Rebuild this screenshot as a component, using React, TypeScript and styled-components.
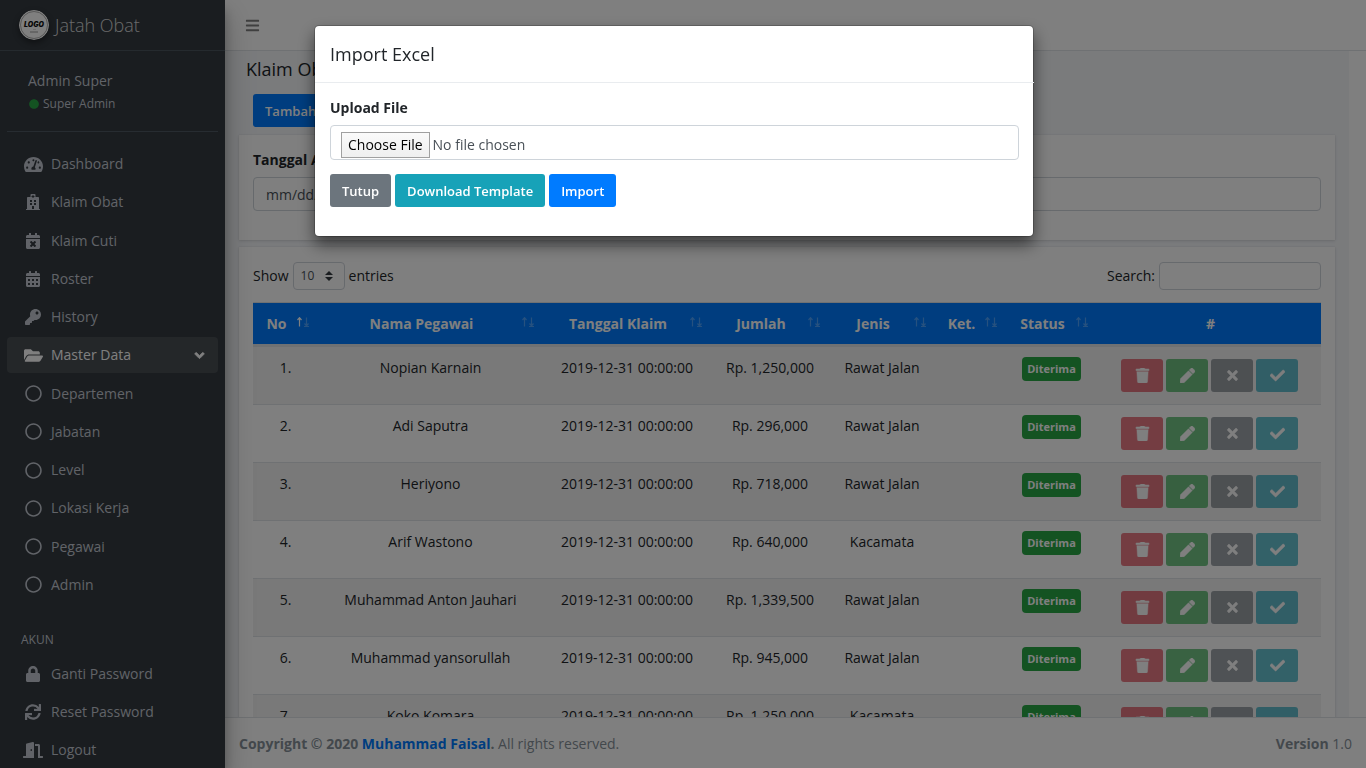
import React from "react";
import styled, { createGlobalStyle } from "styled-components";
import {
  FaAngleDown, FaBars, FaCalendarAlt, FaCalendarTimes, FaCheck, FaCircle, FaDoorOpen, FaFolderOpen,
  FaHospital, FaKey, FaLock, FaPen, FaRegCircle, FaSync, FaTachometerAlt, FaTimes, FaTrash,
} from "react-icons/fa";

const GlobalStyle = createGlobalStyle`
  *, *::before, *::after { box-sizing: border-box; }
  body {
    margin: 0;
    background: #fff;
    color: #212529;
    font: 400 14px/20px "Open Sans", "Noto Sans", sans-serif;
  }
  button, input, select { font: inherit; }
  a { text-decoration: none; }
`;

const Shell = styled.div`
  display: flex;
  height: 100vh;
  overflow: hidden;
`;

const Sidebar = styled.aside`
  display: flex;
  flex-direction: column;
  flex: 0 0 225px;
  z-index: 1;
  background: #343a40;
  color: #c2c7d0;
  box-shadow: 0 14px 28px rgba(0, 0, 0, 0.25), 0 10px 10px rgba(0, 0, 0, 0.22);
`;

const Brand = styled.a`
  display: flex;
  align-items: center;
  gap: 6px;
  height: 51px;
  padding: 0 19px;
  border-bottom: 1px solid #4b545c;
  color: rgba(255, 255, 255, 0.8);
  font-size: 18px;
  font-weight: 300;
`;

const LogoMark = styled.svg`
  width: 30px;
  height: 30px;
  border-radius: 50%;
  box-shadow: 0 3px 6px rgba(0, 0, 0, 0.4);
`;

const UserPanel = styled.div`
  height: 81px;
  margin: 0 7px;
  padding: 19px 21px 0;
  border-bottom: 1px solid #4f5962;
`;

const UserName = styled.div`
  line-height: 22px;
`;

const UserRole = styled.div`
  display: flex;
  align-items: center;
  gap: 4px;
  padding-left: 1px;
  font-size: 12px;
  line-height: 24px;

  svg { color: #28a745; }
`;

const NavList = styled.ul`
  display: flex;
  flex-direction: column;
  justify-content: space-between;
  gap: 2px;
  margin: 0 7px;
  padding: 0;
  list-style: none;
`;

const MainNav = styled(NavList)`
  min-height: 457px;
  margin-top: 14px;
`;

const NavHeader = styled.h2`
  margin: 26px 21px 6px;
  font-size: 12px;
  font-weight: 400;
  line-height: 21px;
`;

const NavLink = styled.a<{ $active?: boolean }>`
  display: flex;
  align-items: center;
  gap: 8px;
  height: 36px;
  padding: 0 11px 0 16px;
  border-radius: 4px;
  background: ${(p) => (p.$active ? "rgba(255, 255, 255, 0.1)" : "transparent")};
  color: ${(p) => (p.$active ? "#fff" : "#c2c7d0")};
`;

const NavIcon = styled.span`
  display: flex;
  justify-content: center;
  width: 20px;
  font-size: 16px;
`;

const NavText = styled.span`
  flex: 1;
`;

const NavArrow = styled(FaAngleDown)`
  stroke: currentColor;
  stroke-width: 24;
`;

const Page = styled.div`
  display: flex;
  flex: 1;
  flex-direction: column;
  min-width: 0;
`;

const Navbar = styled.header`
  display: flex;
  align-items: center;
  flex: 0 0 51px;
  padding: 0 20px;
  border-bottom: 1px solid #dee2e6;
  background: #fff;
`;

const MenuButton = styled.button`
  display: flex;
  padding: 0;
  border: 0;
  background: none;
  color: rgba(0, 0, 0, 0.5);
  font-size: 15px;
`;

const Content = styled.main`
  flex: 1;
  min-height: 0;
  margin-right: 17px;
  padding: 6px 14px 0;
  overflow: hidden;
  background: #f4f6f9;
`;

const PageTitle = styled.h1`
  margin: 0 7px;
  font-size: 18px;
  font-weight: 400;
  line-height: 24px;
`;

const Toolbar = styled.div`
  padding: 13px 14px 8px;
`;

const tones = {
  primary: "#007bff",
  secondary: "#6c757d",
  info: "#17a2b8",
  danger: "#dc3545",
  success: "#28a745",
};

const Button = styled.button<{ $tone: keyof typeof tones }>`
  height: 33px;
  padding: 0 12px;
  border: 0;
  border-radius: 3px;
  background: ${(p) => tones[p.$tone]};
  color: #fff;
  font-size: 13px;
  font-weight: 600;
`;

const Card = styled.section`
  margin-bottom: 7px;
  padding: 14px;
  background: #fff;
  box-shadow: 0 0 1px rgba(0, 0, 0, 0.1), 0 1px 3px rgba(0, 0, 0, 0.12);
`;

const Field = styled.div`
  display: flex;
  flex-direction: column;
  gap: 6px;
`;

const FieldLabel = styled.label`
  font-weight: 700;
  line-height: 22px;
`;

const TextInput = styled.input`
  width: 100%;
  height: 34px;
  padding: 0 12px;
  border: 1px solid #ced4da;
  border-radius: 4px;
  background: #fff;
  color: #495057;

  &::placeholder { color: #495057; }
`;

const FilterCard = styled(Card)`
  padding-bottom: 29px;
`;

const TableControls = styled.div`
  display: flex;
  justify-content: space-between;
  padding: 1px 0 12px;
`;

const ControlLabel = styled.label`
  display: flex;
  align-items: center;
  gap: 4px;
`;

const SelectBox = styled.span`
  display: flex;
  align-items: center;
  width: 52px;
  height: 28px;
  padding-right: 11px;
  border: 1px solid #ced4da;
  border-radius: 4px;

  select {
    flex: 1;
    min-width: 0;
    height: 26px;
    padding: 0 0 0 7px;
    border: 0;
    background: none;
    color: #495057;
    font-size: 12px;
    appearance: none;
  }
`;

const SearchInput = styled(TextInput)`
  width: 162px;
  height: 28px;
`;

const DataTable = styled.table`
  width: 100%;
  border-collapse: separate;
  border-spacing: 0;
  table-layout: fixed;
  text-align: center;
`;

const HeadCell = styled.th`
  height: 44px;
  padding: 0 9px 0 12px;
  border-top: 1px solid #dee2e6;
  border-bottom: 2px solid #dee2e6;
  background: #007bff;
  background-clip: padding-box;
  color: #fff;
  font-weight: 700;
`;

const HeadContent = styled.div`
  display: flex;
  align-items: center;
  gap: 9px;
`;

const HeadText = styled.span`
  flex: 1;
`;

const SortIcon = styled.svg`
  width: 12px;
  height: 14px;
`;

const Row = styled.tr`
  &:nth-child(odd) { background: rgba(0, 0, 0, 0.05); }
`;

const Cell = styled.td`
  height: 58px;
  padding: 11px 0;
  border-top: 1px solid #dee2e6;
  vertical-align: top;
  white-space: nowrap;
`;

const StatusCell = styled(Cell)`
  padding-top: 10px;
`;

const Badge = styled.span`
  display: inline-block;
  padding: 0 5px;
  border-radius: 4px;
  background: #28a745;
  color: #fff;
  font-size: 11px;
  font-weight: 700;
  line-height: 24px;
`;

const Actions = styled.div`
  display: flex;
  justify-content: center;
  gap: 3px;
  padding: 1px 0 0 1px;
`;

const ActionButton = styled(Button)`
  display: flex;
  align-items: center;
  justify-content: center;
  width: 42px;
  font-size: 15px;
  opacity: 0.65;

  svg {
    stroke: currentColor;
    stroke-width: 16;
  }
`;

const Footer = styled.footer`
  display: flex;
  justify-content: space-between;
  align-items: center;
  flex: 0 0 51px;
  padding: 2px 14px 0;
  border-top: 1px solid #dee2e6;
  background: #fff;
  color: #869099;

  a { color: #007bff; }
`;

const Backdrop = styled.div`
  position: fixed;
  inset: 0;
  z-index: 10;
  padding: 25px 18px 0 0;
  background: rgba(0, 0, 0, 0.5);
`;

const Dialog = styled.section`
  width: 100%;
  max-width: 720px;
  margin: 0 auto;
  border: 1px solid rgba(0, 0, 0, 0.2);
  border-radius: 5px;
  background: #fff;
  background-clip: padding-box;
  box-shadow: 0 8px 16px rgba(0, 0, 0, 0.5);
`;

const DialogTitle = styled.h2`
  margin: 0 -1px 0 0;
  padding: 16px 15px;
  border-bottom: 1px solid #e9ecef;
  font-size: 18px;
  font-weight: 400;
  line-height: 24px;
`;

const DialogBody = styled.form`
  padding: 14px 14px 29px 15px;
`;

const FileInput = styled.input`
  width: 100%;
  height: 35px;
  padding: 6px 10px 0;
  border: 1px solid #ced4da;
  border-radius: 4px;
  color: #495057;

  &::file-selector-button {
    height: 26px;
    margin: 0 3px 0 0;
    padding: 0 6px;
    border: 1px solid #a0a0a0;
    border-radius: 0;
    background: linear-gradient(#fafafa, #efefef);
    color: #000;
    font: inherit;
  }
`;

const DialogActions = styled.div`
  display: flex;
  gap: 4px;
  padding-top: 14px;
`;

const menu = [
  { label: "Dashboard", icon: <FaTachometerAlt size={19} /> },
  { label: "Klaim Obat", icon: <FaHospital /> },
  { label: "Klaim Cuti", icon: <FaCalendarTimes /> },
  { label: "Roster", icon: <FaCalendarAlt /> },
  { label: "History", icon: <FaKey /> },
  { label: "Master Data", icon: <FaFolderOpen size={19} />, open: true },
  { label: "Departemen", icon: <FaRegCircle size={17} /> },
  { label: "Jabatan", icon: <FaRegCircle size={17} /> },
  { label: "Level", icon: <FaRegCircle size={17} /> },
  { label: "Lokasi Kerja", icon: <FaRegCircle size={17} /> },
  { label: "Pegawai", icon: <FaRegCircle size={17} /> },
  { label: "Admin", icon: <FaRegCircle size={17} /> },
];

const account = [
  { label: "Ganti Password", icon: <FaLock /> },
  { label: "Reset Password", icon: <FaSync /> },
  { label: "Logout", icon: <FaDoorOpen size={20} /> },
];

const columns = [
  { label: "No", width: 65 },
  { label: "Nama Pegawai", width: 225 },
  { label: "Tanggal Klaim", width: 168 },
  { label: "Jumlah", width: 118 },
  { label: "Jenis", width: 106 },
  { label: "Ket.", width: 71 },
  { label: "Status", width: 91 },
  { label: "#", width: 224 },
];

const claims = [
  ["Nopian Karnain", "Rp. 1,250,000", "Rawat Jalan"],
  ["Adi Saputra", "Rp. 296,000", "Rawat Jalan"],
  ["Heriyono", "Rp. 718,000", "Rawat Jalan"],
  ["Arif Wastono", "Rp. 640,000", "Kacamata"],
  ["Muhammad Anton Jauhari", "Rp. 1,339,500", "Rawat Jalan"],
  ["Muhammad yansorullah", "Rp. 945,000", "Rawat Jalan"],
  ["Koko Komara", "Rp. 1,250,000", "Kacamata"],
];

function Logo() {
  return (
    <LogoMark viewBox="0 0 30 30" aria-hidden="true">
      <circle cx="15" cy="15" r="15" fill="#fff" />
      <circle cx="15" cy="15" r="13.5" fill="none" stroke="#999" strokeWidth="0.8" />
      <text x="15" y="16.500" textAnchor="middle" fontFamily="Inter, sans-serif" fontSize="7" fontWeight="900" fontStyle="italic" fill="#111">LOGO</text>
      <path d="M14 19.500h3" stroke="#ddd" strokeWidth="1" />
      <path d="M11 22h8" stroke="#bbb" strokeWidth="1.500" />
    </LogoMark>
  );
}

function SortArrows({ ascending }: { ascending: boolean }) {
  return (
    <SortIcon viewBox="0 0 12 14" fill="none" stroke="#fff" strokeWidth="1.200" aria-hidden="true">
      <path d="M2.500 9.500V0.500M0.500 3L2.500 0.700L4.500 3" opacity={ascending ? 1 : 0.3} />
      <path d="M9.500 0.500V8.500M7.500 6.500L9.500 8.800L11.500 6.500M7 9.500H12" opacity="0.3" />
    </SortIcon>
  );
}

function NavItem({ label, icon, open }: { label: string; icon: React.ReactNode; open?: boolean }) {
  return (
    <li>
      <NavLink href="#" $active={open}>
        <NavIcon>{icon}</NavIcon>
        <NavText>{label}</NavText>
        {open && <NavArrow size={15} />}
      </NavLink>
    </li>
  );
}

export default function App() {
  return (
    <>
      <GlobalStyle />
      <Shell>
        <Sidebar>
          <Brand href="#"><Logo />Jatah Obat</Brand>
          <UserPanel>
            <UserName>Admin Super</UserName>
            <UserRole><FaCircle size={10} />Super Admin</UserRole>
          </UserPanel>
          <nav>
            <MainNav>{menu.map((m) => <NavItem key={m.label} {...m} />)}</MainNav>
            <NavHeader>AKUN</NavHeader>
            <NavList>{account.map((m) => <NavItem key={m.label} {...m} />)}</NavList>
          </nav>
        </Sidebar>
        <Page>
          <Navbar>
            <MenuButton type="button" aria-label="Menu"><FaBars /></MenuButton>
          </Navbar>
          <Content>
            <PageTitle>Klaim Obat</PageTitle>
            <Toolbar><Button type="button" $tone="primary">Tambah</Button></Toolbar>
            <FilterCard>
              <Field>
                <FieldLabel htmlFor="start-date">Tanggal Awal</FieldLabel>
                <TextInput id="start-date" placeholder="mm/dd/yyyy" />
              </Field>
            </FilterCard>
            <Card>
              <TableControls>
                <ControlLabel>
                  Show
                  <SelectBox>
                    <select defaultValue="10"><option>10</option><option>25</option></select>
                    <svg width="8" height="10" viewBox="0 0 8 10" fill="#343a40" aria-hidden="true">
                      <path d="M0 4L4 0L8 4ZM0 6L4 10L8 6Z" />
                    </svg>
                  </SelectBox>
                  entries
                </ControlLabel>
                <ControlLabel>Search: <SearchInput type="search" /></ControlLabel>
              </TableControls>
              <DataTable>
                <colgroup>{columns.map((c) => <col key={c.label} width={c.width} />)}</colgroup>
                <thead>
                  <tr>
                    {columns.map((c, i) => (
                      <HeadCell key={c.label} scope="col">
                        <HeadContent>
                          <HeadText>{c.label}</HeadText>
                          {c.label !== "#" && <SortArrows ascending={i === 0} />}
                        </HeadContent>
                      </HeadCell>
                    ))}
                  </tr>
                </thead>
                <tbody>
                  {claims.map(([name, amount, kind], i) => (
                    <Row key={name}>
                      <Cell>{i + 1}.</Cell>
                      <Cell>{name}</Cell>
                      <Cell>2019-12-31 00:00:00</Cell>
                      <Cell>{amount}</Cell>
                      <Cell>{kind}</Cell>
                      <Cell />
                      <StatusCell><Badge>Diterima</Badge></StatusCell>
                      <Cell>
                        <Actions>
                          <ActionButton type="button" $tone="danger" aria-label="Hapus"><FaTrash /></ActionButton>
                          <ActionButton type="button" $tone="success" aria-label="Ubah"><FaPen /></ActionButton>
                          <ActionButton type="button" $tone="secondary" aria-label="Tolak"><FaTimes /></ActionButton>
                          <ActionButton type="button" $tone="info" aria-label="Terima"><FaCheck /></ActionButton>
                        </Actions>
                      </Cell>
                    </Row>
                  ))}
                </tbody>
              </DataTable>
            </Card>
          </Content>
          <Footer>
            <span><strong>Copyright © 2020 <a href="#">Muhammad Faisal</a>.</strong> All rights reserved.</span>
            <span><strong>Version</strong> 1.0</span>
          </Footer>
        </Page>
      </Shell>
      <Backdrop>
        <Dialog role="dialog" aria-modal="true" aria-labelledby="import-title">
          <DialogTitle id="import-title">Import Excel</DialogTitle>
          <DialogBody>
            <Field>
              <FieldLabel htmlFor="excel-file">Upload File</FieldLabel>
              <FileInput id="excel-file" type="file" />
            </Field>
            <DialogActions>
              <Button type="button" $tone="secondary">Tutup</Button>
              <Button type="button" $tone="info">Download Template</Button>
              <Button type="submit" $tone="primary">Import</Button>
            </DialogActions>
          </DialogBody>
        </Dialog>
      </Backdrop>
    </>
  );
}
